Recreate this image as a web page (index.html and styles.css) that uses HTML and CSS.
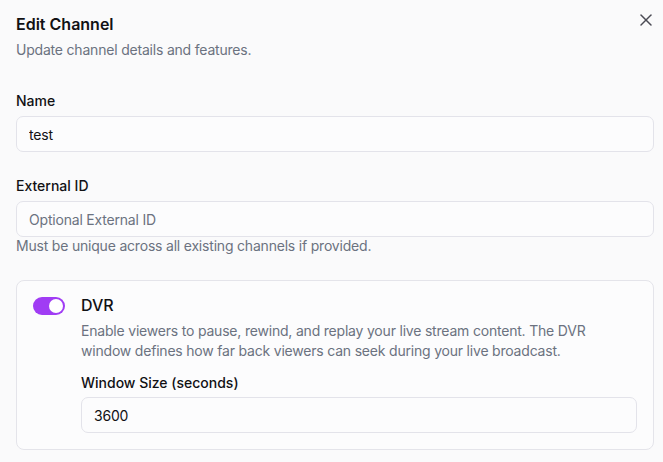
FILE: index.html
```html
<!DOCTYPE html>
<html lang="en">
<head>
    <meta charset="UTF-8">
    <title>Edit Channel</title>
    <link rel="stylesheet" href="styles.css">
</head>
<body>
<div class="dialog">
    <button class="close-btn" type="button" aria-label="Close">
        <svg width="16" height="16" viewBox="0 0 16 16" fill="none" stroke="currentColor" stroke-width="1.5" stroke-linecap="round">
            <path d="M3 3L13 13"/>
            <path d="M13 3L3 13"/>
        </svg>
    </button>

    <div class="dialog-header">
        <h2 class="dialog-title">Edit Channel</h2>
        <p class="dialog-desc">Update channel details and features.</p>
    </div>

    <div class="field field-name">
        <label class="label">Name</label>
        <input class="input" type="text" value="test">
    </div>

    <div class="field field-ext">
        <label class="label">External ID</label>
        <input class="input" type="text" placeholder="Optional External ID">
        <p class="hint">Must be unique across all existing channels if provided.</p>
    </div>

    <div class="feature-card">
        <div class="switch on"><span class="knob"></span></div>
        <div class="feature-body">
            <div class="feature-title">DVR</div>
            <p class="feature-desc">Enable viewers to pause, rewind, and replay your live stream content. The DVR window defines how far back viewers can seek during your live broadcast.</p>
            <div class="field field-window">
                <label class="label">Window Size (seconds)</label>
                <input class="input" type="text" value="3600">
            </div>
        </div>
    </div>
</div>
</body>
</html>
```

FILE: styles.css
```css
*{margin: 0;padding: 0;box-sizing: border-box;}
body{background: #fafafb;font-family: Inter, "Noto Sans", sans-serif;color: #0a0a0f;}

.dialog{position: relative;width: 663px;height: 462px;padding: 16px 9px 0 16px;overflow: hidden;}
.close-btn{position: absolute;top: 12px;right: 9px;width: 16px;height: 16px;border: 0;background: none;color: #4b4b55;display: flex;}

.dialog-title{font-size: 16px;line-height: 16px;font-weight: 600;color: #111114;}
.dialog-desc{margin-top: 8px;font-size: 14px;line-height: 20px;color: #6b7280;letter-spacing: -0.2px;}

.field{display: flex;flex-direction: column;gap: 8px;}
.field-name{margin-top: 34px;}
.field-ext{margin-top: 27px;}
.label{font-size: 14px;line-height: 14px;font-weight: 500;color: #111114;}
.input{height: 36px;width: 100%;border: 1px solid #e3e3ea;border-radius: 7px;background: #fcfcfd;padding: 0 12px;font-family: inherit;font-size: 14px;letter-spacing: -0.2px;color: #111114;outline: none;}
.input::placeholder{color: #6b7280;}
.hint{margin-top: -9px;font-size: 14px;line-height: 20px;color: #6b7280;letter-spacing: -0.2px;}

.feature-card{margin-top: 24px;display: flex;gap: 16px;border: 1px solid #e4e4ea;border-radius: 8px;background: #fcfcfd;padding: 16px;}
.switch{flex: none;width: 32px;height: 18px;border-radius: 9px;background: #e4e4e7;position: relative;}
.switch.on{background: #a03cf4;}
.knob{position: absolute;top: 2px;left: 2px;width: 14px;height: 14px;border-radius: 50%;background: #fff;}
.switch.on .knob{left: 16px;}

.feature-body{flex: 1;}
.feature-title{font-size: 16px;line-height: 16px;font-weight: 500;color: #111114;}
.feature-desc{margin-top: 8px;font-size: 14px;line-height: 20px;color: #6b7280;letter-spacing: -0.2px;}
.field-window{margin-top: 15px;gap: 7px;}
```
